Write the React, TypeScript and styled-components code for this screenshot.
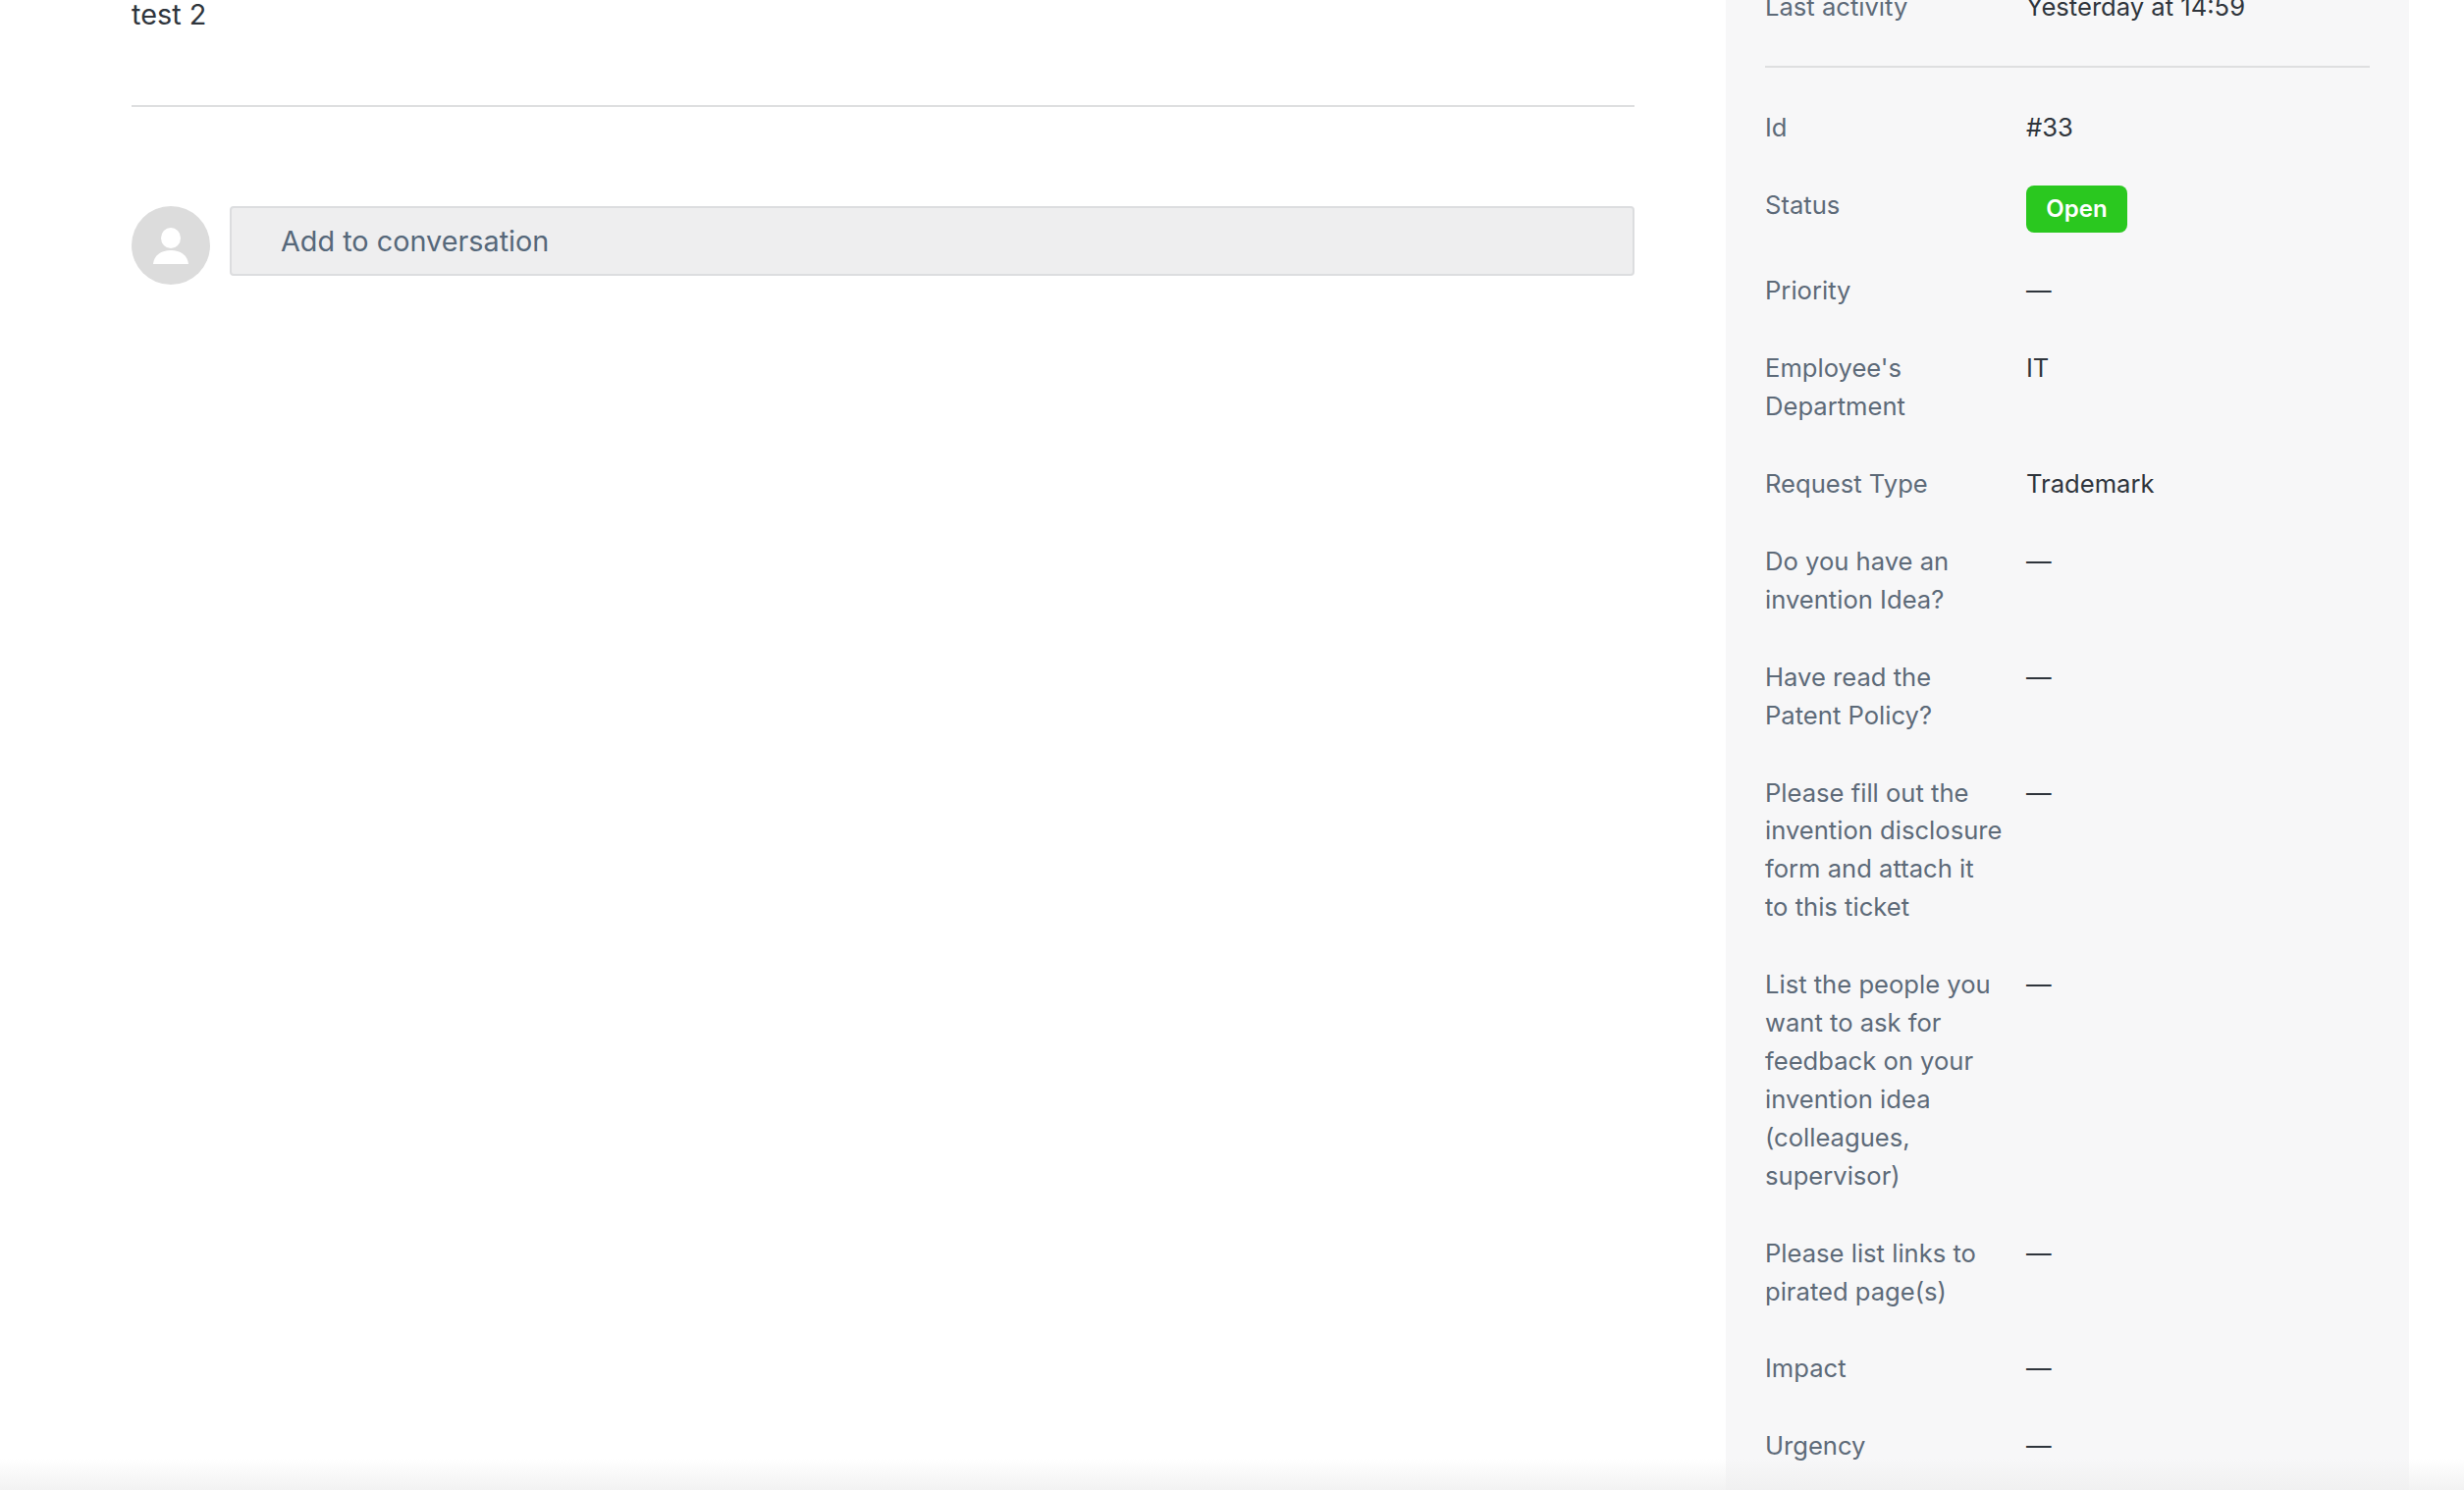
import React from "react";
import styled, { createGlobalStyle } from "styled-components";

const Global = createGlobalStyle`
  html, body { margin: 0; height: 100%; overflow: hidden; background: #fff; }
  body { font-family: Inter, "Liberation Sans", sans-serif; }
`;
const Page = styled.div`
  position: relative; display: flex; width: 2510px; height: 1518px; overflow: hidden;
  padding: 0 56px 0 134px; box-sizing: border-box; justify-content: space-between;
`;
const Main = styled.main`width: 1531px; display: flex; flex-direction: column;`;
const Message = styled.div`
  margin-top: -2px; height: 111px; box-sizing: border-box; border-bottom: 2px solid #dedfe0;
  font-size: 28.8px; line-height: 34px; color: #2f353c;
`;
const Composer = styled.div`display: flex; gap: 20px; margin-top: 101px;`;
const Avatar = styled.div`
  width: 80px; height: 80px; border-radius: 50%; background: #dcdcdc; flex: none;
  display: flex; align-items: center; justify-content: center;
`;
const FakeInput = styled.div`
  flex: 1; height: 71px; box-sizing: border-box; border: 2px solid #dcdddf; border-radius: 4px;
  background: #eeeeef; padding: 0 0 1px 50px; display: flex; align-items: center;
  font-size: 28.8px; color: #56687a;
`;
const Side = styled.aside`
  width: 696px; height: 1518px; box-sizing: border-box; background: #f7f7f8; padding: 0 40px; overflow: hidden;
`;
const Activity = styled.div`
  margin-top: -12px; padding-bottom: 40px; border-bottom: 2px solid #dedfe0; margin-bottom: 42.5px;
`;
const Rows = styled.div`display: flex; flex-direction: column; gap: 40px;`;
const Row = styled.div`display: grid; grid-template-columns: 266px 1fr; font-size: 25.6px; line-height: 38.9px;`;
const Label = styled.div`color: #5d6a78; width: 242.5px;`;
const Value = styled.div`color: #2f353c;`;
const Badge = styled.span`
  display: inline-flex; align-items: center; justify-content: center; margin-top: -1px;
  width: 103px; height: 48px; border-radius: 8px; background: #2ac81f; color: #fff; font-size: 24px; font-weight: 600;
`;
const Fade = styled.div`
  position: absolute; left: 0; right: 0; bottom: 0; height: 32px; pointer-events: none;
  background: linear-gradient(to bottom, rgba(238,238,238,0), rgba(238,238,238,0.75));
`;

const rows: [string, string][] = [
  ["Priority", "—"],
  ["Employee's Department", "IT"],
  ["Request Type", "Trademark"],
  ["Do you have an invention Idea?", "—"],
  ["Have read the Patent Policy?", "—"],
  ["Please fill out the invention disclosure form and attach it to this ticket", "—"],
  ["List the people you want to ask for feedback on your invention idea (colleagues, supervisor)", "—"],
  ["Please list links to pirated page(s)", "—"],
  ["Impact", "—"],
  ["Urgency", "—"],
];

export default function App() {
  return (
    <Page>
      <Global />
      <Main>
        <Message>test 2</Message>
        <Composer>
          <Avatar>
            <svg width="36" height="37" viewBox="0 0 36 37" fill="#fff">
              <ellipse cx="18" cy="10.5" rx="10" ry="10.5" />
              <path d="M0 37C1 28 8 23 18 23s17 5 18 14z" />
            </svg>
          </Avatar>
          <FakeInput>Add to conversation</FakeInput>
        </Composer>
      </Main>
      <Side>
        <Activity>
          <Row><Label>Last activity</Label><Value>Yesterday at 14:59</Value></Row>
        </Activity>
        <Rows>
          <Row><Label>Id</Label><Value>#33</Value></Row>
          <Row><Label>Status</Label><Value><Badge>Open</Badge></Value></Row>
          {rows.map(([l, v]) => (
            <Row key={l}><Label>{l}</Label><Value>{v}</Value></Row>
          ))}
        </Rows>
      </Side>
      <Fade />
    </Page>
  );
}
